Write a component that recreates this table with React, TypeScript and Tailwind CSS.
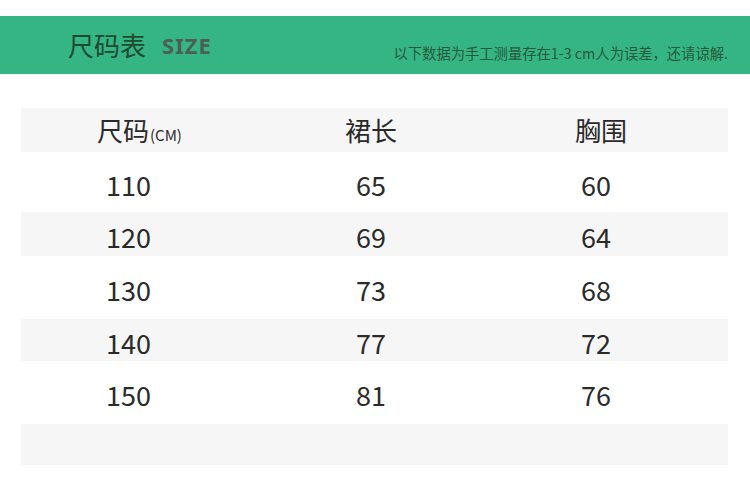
const rows = [
  { size: '110', length: '65', chest: '60', gray: false, h: 'h-[60px]' },
  { size: '120', length: '69', chest: '64', gray: true, h: 'h-[44px]' },
  { size: '130', length: '73', chest: '68', gray: false, h: 'h-[63px]' },
  { size: '140', length: '77', chest: '72', gray: true, h: 'h-[42px]' },
  { size: '150', length: '81', chest: '76', gray: false, h: 'h-[63px]' },
];

const cjk = { fontFamily: '"Noto Sans CJK SC", "Noto Sans", sans-serif' };

export default function App() {
  return (
    <div className="w-[750px] h-[504px] bg-white overflow-hidden" style={cjk}>
      {/* Title band */}
      <div className="mt-[16px] h-[58px] bg-[#35b583] flex items-center pl-[68px] pr-[22px]">
        <span className="text-[26px] leading-none text-[#1d4a31]">尺码表</span>
        <span className="ml-[16px] text-[22px] leading-none font-bold tracking-[1px] text-[#4b5f53]" style={{ fontFamily: '"Noto Sans", sans-serif' }}>SIZE</span>
        <span className="ml-auto text-[14.3px] leading-none text-[#275a3d] pt-[16px]">以下数据为手工测量存在1-3 cm人为误差，还请谅解.</span>
      </div>

      {/* Table */}
      <div className="mt-[34px] mx-[21px] w-[707px] text-[#2a2a2a]">
        <div className="h-[44px] bg-[#f6f6f6] flex items-center">
          <div className="w-[218px] pl-[76px] text-[26px] leading-none flex items-end">
            尺码<span className="text-[15px] ml-[1px] mb-[1px]">(CM)</span>
          </div>
          <div className="w-[264px] text-center text-[26px] leading-none">裙长</div>
          <div className="w-[196px] text-center text-[26px] leading-none">胸围</div>
        </div>
        {rows.map(r => (
          <div key={r.size} className={`${r.h} flex items-center ${r.gray ? 'bg-[#f6f6f6]' : 'bg-white'}`}>
            <div className="w-[218px] pl-[85px] text-[27px] leading-none pt-[4px]">{r.size}</div>
            <div className="w-[264px] text-center text-[27px] leading-none pt-[4px]">{r.length}</div>
            <div className="w-[186px] text-center text-[27px] leading-none pt-[4px]">{r.chest}</div>
          </div>
        ))}
        <div className="h-[41px] bg-[#f6f6f6]" />
      </div>
    </div>
  );
}
